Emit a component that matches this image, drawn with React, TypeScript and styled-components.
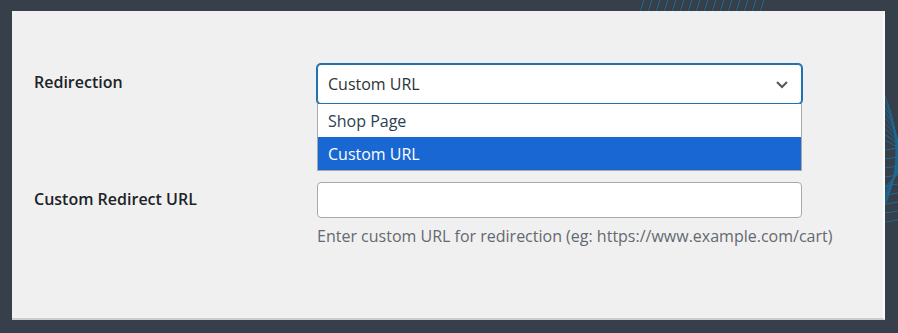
import styled, { createGlobalStyle } from "styled-components";

const GlobalStyle = createGlobalStyle`
  html, body {
    margin: 0;
    padding: 0;
    background: #363f4a;
  }
  body {
    font-family: "Open Sans", "Noto Sans", sans-serif;
  }
`;

const Page = styled.div`
  position: relative;
  width: 898px;
  height: 333px;
  overflow: hidden;
  padding: 11px 0 0 12px;
  box-sizing: border-box;
`;

const Decor = styled.svg`
  position: absolute;
  left: 0;
  top: 0;
  width: 898px;
  height: 333px;
`;

const Panel = styled.div`
  position: relative;
  width: 873px;
  height: 309px;
  box-sizing: border-box;
  background: #f0f0f1;
  border-right: 2px solid #fafafa;
  border-bottom: 2px solid #c9ccd0;
  padding: 53px 0 0 22px;
`;

const FormGrid = styled.div`
  display: grid;
  grid-template-columns: 283px 485px;
  row-gap: 78px;
`;

const Label = styled.div<{ $top: number }>`
  padding-top: ${(p) => p.$top}px;
  font-size: 16px;
  font-weight: 600;
  color: #1d2327;
  line-height: 20px;
`;

const Field = styled.div`
  position: relative;
`;

const Select = styled.div`
  height: 40px;
  box-sizing: border-box;
  border: 1px solid #2271b1;
  box-shadow: 0 0 0 1px #2271b1;
  border-radius: 4px;
  background: #fff;
  display: flex;
  align-items: center;
  justify-content: space-between;
  padding: 0 12px 0 10px;
  font-size: 16px;
  color: #2c3338;
`;

const List = styled.div`
  position: absolute;
  left: 0;
  right: 0;
  top: 40px;
  background: #fff;
  border: 1px solid #a7aaad;
  border-top: none;
  z-index: 2;
`;

const Option = styled.div<{ $active?: boolean }>`
  height: 33px;
  display: flex;
  align-items: center;
  padding-left: 10px;
  font-size: 16px;
  background: ${(p) => (p.$active ? "#1967d2" : "#fff")};
  color: ${(p) => (p.$active ? "#fff" : "#2c3e50")};
`;

const Input = styled.div`
  height: 36px;
  box-sizing: border-box;
  border: 1px solid #a7aaad;
  border-radius: 4px;
  background: #fff;
`;

const Help = styled.div`
  margin-top: 7px;
  font-size: 16px;
  line-height: 22px;
  color: #646970;
  white-space: nowrap;
`;

function Chevron() {
  return (
    <svg width="14" height="10" viewBox="0 0 14 10">
      <path d="M2 3 L7 8 L12 3" fill="none" stroke="#50575e" strokeWidth="2" />
    </svg>
  );
}

function App() {
  const topLines = Array.from({ length: 16 }, (_, i) => 640 + i * 8);
  const rings = Array.from({ length: 9 }, (_, i) => i);
  return (
    <Page>
      <GlobalStyle />
      <Decor viewBox="0 0 898 333">
        <g stroke="#1b6f9c" strokeWidth="1" fill="none" opacity="0.9">
          {topLines.map((x) => (
            <line key={x} x1={x} y1={12} x2={x + 4} y2={0} />
          ))}
          {rings.map((i) => (
            <path
              key={i}
              d={`M${870 - i * 2} ${70 + i * 8} C ${900 + i * 3} ${110 + i * 4}, ${905} ${170}, ${880} ${215 - i * 3}`}
            />
          ))}
          {rings.map((i) => (
            <line key={"h" + i} x1={885} y1={150 + i * 9} x2={898} y2={148 + i * 9} />
          ))}
        </g>
      </Decor>
      <Panel>
        <FormGrid>
          <Label $top={8}>Redirection</Label>
          <Field>
            <Select>
              <span>Custom URL</span>
              <Chevron />
            </Select>
            <List>
              <Option>Shop Page</Option>
              <Option $active>Custom URL</Option>
            </List>
          </Field>
          <Label $top={7}>Custom Redirect URL</Label>
          <Field>
            <Input />
            <Help>Enter custom URL for redirection (eg: https://www.example.com/cart)</Help>
          </Field>
        </FormGrid>
      </Panel>
    </Page>
  );
}

export default App;
